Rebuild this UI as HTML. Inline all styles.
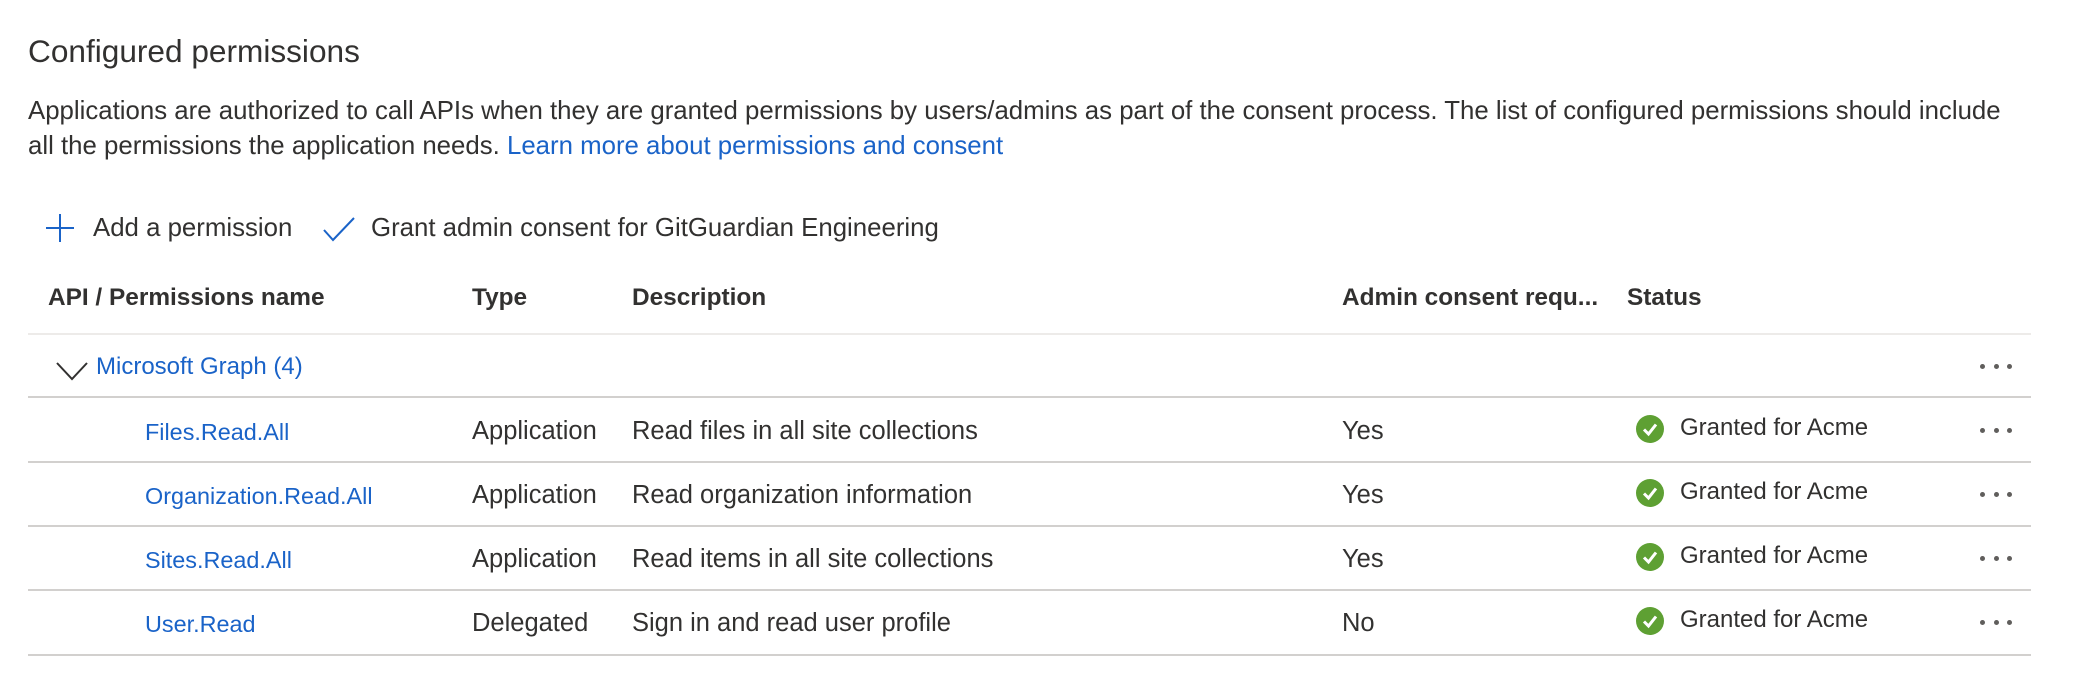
<!DOCTYPE html>
<html><head><meta charset="utf-8"><style>
body{margin:0;width:2076px;height:698px;background:#fff;font-family:"Liberation Sans",Arial,sans-serif;color:#323130;position:relative;overflow:hidden}
.a{position:absolute;white-space:nowrap}
.l{color:#1a63c8}
.hl{position:absolute;left:28px;width:2003px;height:2px;background:#d2d0ce}
.b{font-weight:bold}
.dots{position:absolute;left:1980px;width:32px;display:flex;justify-content:space-between}
.dots i{width:5px;height:5px;border-radius:50%;background:#605e5c;display:block}
.ck{position:absolute;left:1636px;width:28px;height:28px}
.t{font-size:25.5px}
.n{font-size:23.4px;color:#1a63c8}
.g{font-size:24px}
</style></head><body>
<div class="a" style="left:28px;top:33px;font-size:31.6px">Configured permissions</div>
<div class="a" style="left:28px;top:94px;font-size:25.8px;line-height:35px">Applications are authorized to call APIs when they are granted permissions by users/admins as part of the consent process. The list of configured permissions should include<br>all the permissions the application needs. <span class="l">Learn more about permissions and consent</span></div>

<svg class="a" style="left:44px;top:213px" width="32" height="30"><path d="M16 1V29M2 15H30" stroke="#1a63c8" stroke-width="2" fill="none"/></svg>
<div class="a" style="left:93px;top:214px;font-size:25.8px">Add a permission</div>
<svg class="a" style="left:322px;top:216px" width="34" height="26"><path d="M2 14L11 24L32 2" stroke="#1a63c8" stroke-width="2" fill="none"/></svg>
<div class="a" style="left:371px;top:214px;font-size:25.8px">Grant admin consent for GitGuardian Engineering</div>

<div class="a b" style="left:48px;top:284px;font-size:24.4px">API / Permissions name</div>
<div class="a b" style="left:472px;top:284px;font-size:24.4px">Type</div>
<div class="a b" style="left:632px;top:284px;font-size:24.4px">Description</div>
<div class="a b" style="left:1342px;top:284px;font-size:24.4px">Admin consent requ...</div>
<div class="a b" style="left:1627px;top:284px;font-size:24.4px">Status</div>
<div class="hl" style="top:333px;background:#edebe9"></div>

<svg class="a" style="left:56px;top:361px" width="32" height="20"><path d="M1 2L16 18L31 2" stroke="#323130" stroke-width="2" fill="none"/></svg>
<div class="a l" style="left:96px;top:353px;font-size:24px">Microsoft Graph (4)</div>
<div class="dots" style="top:364px"><i></i><i></i><i></i></div>
<div class="hl" style="top:396px"></div>

<div class="a n" style="left:145px;top:419px">Files.Read.All</div>
<div class="a t" style="left:472px;top:417px">Application</div>
<div class="a t" style="left:632px;top:417px">Read files in all site collections</div>
<div class="a t" style="left:1342px;top:417px">Yes</div>
<svg class="ck" style="top:415px" viewBox="0 0 28 28"><circle cx="14" cy="14" r="14" fill="#5ea033"/><path d="M8 14.5L12.5 19L20 9.5" stroke="#fff" stroke-width="3" fill="none"/></svg>
<div class="a g" style="left:1680px;top:414px">Granted for Acme</div>
<div class="dots" style="top:428px"><i></i><i></i><i></i></div>
<div class="hl" style="top:461px"></div>

<div class="a n" style="left:145px;top:483px">Organization.Read.All</div>
<div class="a t" style="left:472px;top:481px">Application</div>
<div class="a t" style="left:632px;top:481px">Read organization information</div>
<div class="a t" style="left:1342px;top:481px">Yes</div>
<svg class="ck" style="top:479px" viewBox="0 0 28 28"><circle cx="14" cy="14" r="14" fill="#5ea033"/><path d="M8 14.5L12.5 19L20 9.5" stroke="#fff" stroke-width="3" fill="none"/></svg>
<div class="a g" style="left:1680px;top:478px">Granted for Acme</div>
<div class="dots" style="top:492px"><i></i><i></i><i></i></div>
<div class="hl" style="top:525px"></div>

<div class="a n" style="left:145px;top:547px">Sites.Read.All</div>
<div class="a t" style="left:472px;top:545px">Application</div>
<div class="a t" style="left:632px;top:545px">Read items in all site collections</div>
<div class="a t" style="left:1342px;top:545px">Yes</div>
<svg class="ck" style="top:543px" viewBox="0 0 28 28"><circle cx="14" cy="14" r="14" fill="#5ea033"/><path d="M8 14.5L12.5 19L20 9.5" stroke="#fff" stroke-width="3" fill="none"/></svg>
<div class="a g" style="left:1680px;top:542px">Granted for Acme</div>
<div class="dots" style="top:556px"><i></i><i></i><i></i></div>
<div class="hl" style="top:589px"></div>

<div class="a n" style="left:145px;top:611px">User.Read</div>
<div class="a t" style="left:472px;top:609px">Delegated</div>
<div class="a t" style="left:632px;top:609px">Sign in and read user profile</div>
<div class="a t" style="left:1342px;top:609px">No</div>
<svg class="ck" style="top:607px" viewBox="0 0 28 28"><circle cx="14" cy="14" r="14" fill="#5ea033"/><path d="M8 14.5L12.5 19L20 9.5" stroke="#fff" stroke-width="3" fill="none"/></svg>
<div class="a g" style="left:1680px;top:606px">Granted for Acme</div>
<div class="dots" style="top:620px"><i></i><i></i><i></i></div>
<div class="hl" style="top:654px"></div>
</body></html>
